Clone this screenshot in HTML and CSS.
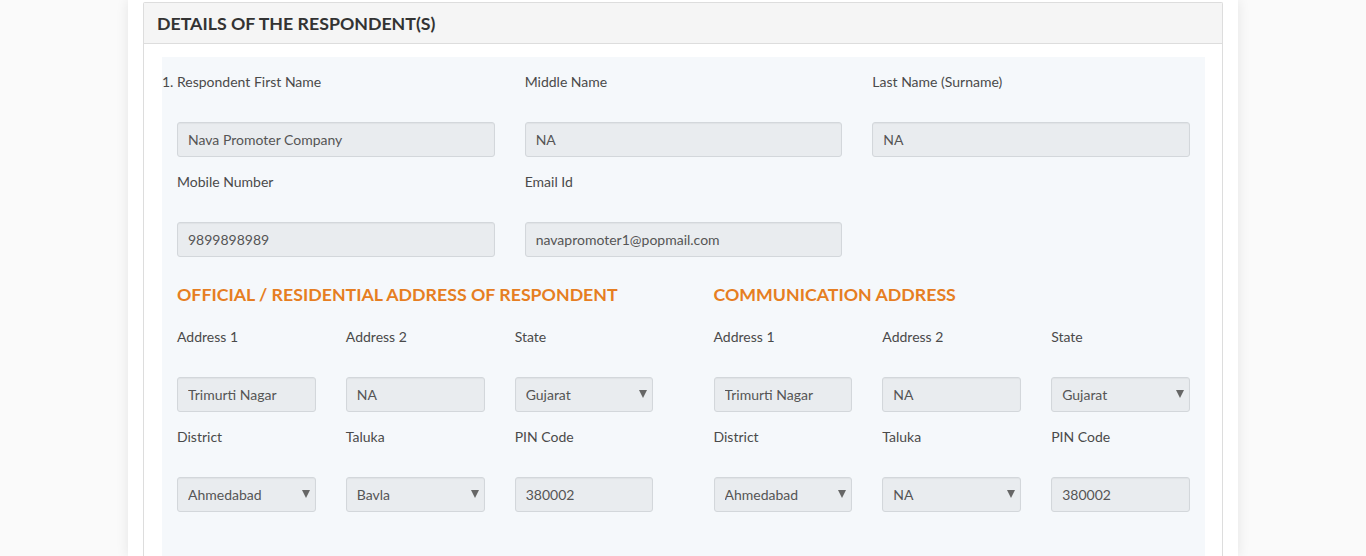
FILE: index.html
```html
<!DOCTYPE html>
<html lang="en">
<head>
<meta charset="utf-8">
<title>Details of the Respondent(s)</title>
<link rel="stylesheet" href="styles.css">
</head>
<body>
<div class="page">
  <div class="panel">
    <div class="panel-heading">DETAILS OF THE RESPONDENT(S)</div>
    <div class="panel-body">
      <div class="box">
        <div class="grid3">
          <div class="field">
            <label class="lbl"><span class="num">1.</span>Respondent First Name</label>
            <input class="ctl" type="text" value="Nava Promoter Company" readonly>
          </div>
          <div class="field">
            <label class="lbl">Middle Name</label>
            <input class="ctl" type="text" value="NA" readonly>
          </div>
          <div class="field">
            <label class="lbl">Last Name (Surname)</label>
            <input class="ctl" type="text" value="NA" readonly>
          </div>
          <div class="field">
            <label class="lbl">Mobile Number</label>
            <input class="ctl" type="text" value="9899898989" readonly>
          </div>
          <div class="field">
            <label class="lbl">Email Id</label>
            <input class="ctl" type="text" value="navapromoter1@popmail.com" readonly>
          </div>
        </div>

        <div class="addr">
          <div class="addr-col">
            <h3 class="sec">OFFICIAL / RESIDENTIAL ADDRESS OF RESPONDENT</h3>
            <div class="grid3s">
              <div class="field"><label class="lbl">Address 1</label><input class="ctl" type="text" value="Trimurti Nagar" readonly></div>
              <div class="field"><label class="lbl">Address 2</label><input class="ctl" type="text" value="NA" readonly></div>
              <div class="field"><label class="lbl">State</label><div class="sel"><select class="ctl"><option>Gujarat</option></select></div></div>
              <div class="field"><label class="lbl">District</label><div class="sel"><select class="ctl"><option>Ahmedabad</option></select></div></div>
              <div class="field"><label class="lbl">Taluka</label><div class="sel"><select class="ctl"><option>Bavla</option></select></div></div>
              <div class="field"><label class="lbl">PIN Code</label><input class="ctl" type="text" value="380002" readonly></div>
            </div>
          </div>
          <div class="addr-col">
            <h3 class="sec">COMMUNICATION ADDRESS</h3>
            <div class="grid3s">
              <div class="field"><label class="lbl">Address 1</label><input class="ctl" type="text" value="Trimurti Nagar" readonly></div>
              <div class="field"><label class="lbl">Address 2</label><input class="ctl" type="text" value="NA" readonly></div>
              <div class="field"><label class="lbl">State</label><div class="sel"><select class="ctl"><option>Gujarat</option></select></div></div>
              <div class="field"><label class="lbl">District</label><div class="sel"><select class="ctl"><option>Ahmedabad</option></select></div></div>
              <div class="field"><label class="lbl">Taluka</label><div class="sel"><select class="ctl"><option>NA</option></select></div></div>
              <div class="field"><label class="lbl">PIN Code</label><input class="ctl" type="text" value="380002" readonly></div>
            </div>
          </div>
        </div>
      </div>
    </div>
  </div>
</div>
</body>
</html>
```

FILE: styles.css
```css
* { box-sizing: border-box; }
html, body { margin: 0; padding: 0; }
body {
  background: #fafafa;
  font-family: Lato, "Open Sans", "Liberation Sans", sans-serif;
  color: #444;
  font-size: 14px;
}
.page {
  width: 1110px;
  margin: 0 auto;
  min-height: 100vh;
  background: #fff;
  box-shadow: 0 0 12px rgba(0, 0, 0, 0.09);
  padding: 2px 15px 0;
}
.panel {
  border: 1px solid #dddddd;
  border-bottom: 0;
  border-radius: 2px 2px 0 0;
  min-height: 554px;
}
.panel-heading {
  height: 41px;
  line-height: 40px;
  background: #f5f5f5;
  border-bottom: 1px solid #dddddd;
  padding: 0 13px;
  font-size: 17.75px;
  font-weight: 700;
  color: #333;
}
.panel-body {
  padding: 13px 17px 0 18px;
}
.box {
  background: #f5f8fb;
  padding: 15px 15px 0;
  min-height: 500px;
}
.grid3 {
  display: grid;
  grid-template-columns: repeat(3, 1fr);
  column-gap: 30px;
}
.field {
  display: flex;
  flex-direction: column;
  padding-bottom: 16px;
}
.lbl {
  display: block;
  height: 20px;
  line-height: 20px;
  margin-bottom: 30px;
  color: #4a4a4a;
  font-size: 14px;
  white-space: nowrap;
}
.num {
  display: inline-block;
  margin-left: -15px;
  width: 15px;
}
.ctl {
  display: block;
  width: 100%;
  height: 35px;
  margin: 0;
  padding: 0 10px;
  border: 1px solid #d3d7db;
  border-radius: 3px;
  background: #e9ecef;
  color: #555;
  font-family: Lato, "Open Sans", "Liberation Sans", sans-serif;
  font-size: 14px;
  box-shadow: inset 0 1px 1px rgba(0, 0, 0, 0.04);
  outline: none;
}
.field .ctl { margin-bottom: -1px; }
select.ctl {
  -webkit-appearance: none;
  appearance: none;
  padding-right: 24px;
}
.sel {
  position: relative;
}
.sel::after {
  content: "";
  position: absolute;
  right: 6px;
  top: 13px;
  width: 0;
  height: 0;
  border-left: 4.5px solid transparent;
  border-right: 4.5px solid transparent;
  border-top: 8px solid #666;
  pointer-events: none;
}
.addr {
  display: grid;
  grid-template-columns: 1fr 1fr;
  column-gap: 60px;
  margin-top: 10px;
}
.sec {
  margin: 0 0 21px;
  height: 24px;
  line-height: 24px;
  font-size: 17.75px;
  font-weight: 700;
  color: #e67e22;
  white-space: nowrap;
}
.grid3s {
  display: grid;
  grid-template-columns: repeat(3, 1fr);
  column-gap: 30px;
}
```
